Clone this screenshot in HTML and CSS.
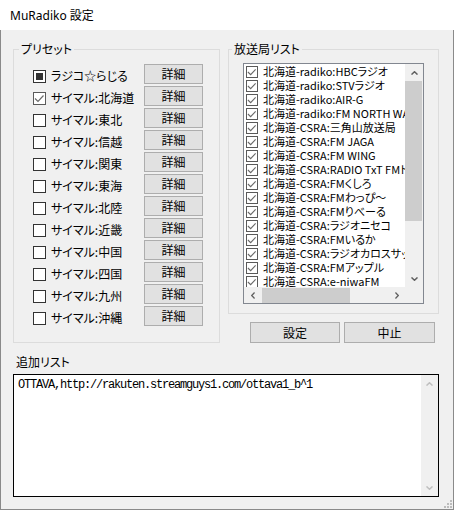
FILE: index.html
```html
<!DOCTYPE html>
<html lang="ja">
<head>
<meta charset="utf-8">
<title>MuRadiko 設定</title>
<link rel="stylesheet" href="styles.css">
</head>
<body>
<svg class="defs" width="0" height="0" aria-hidden="true">
  <defs>
    <symbol id="chk" viewBox="0 0 11 11"><polyline points="1,5.5 4,8.5 9.5,2.5" fill="none" stroke="#6a6a6a" stroke-width="1.2"/></symbol>
    <symbol id="ar-up" viewBox="0 0 7 4"><polyline points="0.5,3.6 3.5,0.7 6.5,3.6" fill="none" stroke="currentColor" stroke-width="1.4"/></symbol>
    <symbol id="ar-down" viewBox="0 0 7 4"><polyline points="0.5,0.4 3.5,3.3 6.5,0.4" fill="none" stroke="currentColor" stroke-width="1.4"/></symbol>
    <symbol id="ar-left" viewBox="0 0 4 7"><polyline points="3.6,0.5 0.7,3.5 3.6,6.5" fill="none" stroke="currentColor" stroke-width="1.4"/></symbol>
    <symbol id="ar-right" viewBox="0 0 4 7"><polyline points="0.4,0.5 3.3,3.5 0.4,6.5" fill="none" stroke="currentColor" stroke-width="1.4"/></symbol>
  </defs>
</svg>
<div class="window">
  <div class="titlebar">MuRadiko 設定</div>
  <div class="client">
    <div class="main">
      <div class="group preset">
        <div class="group-label">プリセット</div>
        <div class="preset-rows">
          <div class="prow"><span class="cb mixed"><span class="mix"></span></span><span class="plabel">ラジコ☆らじる</span><button class="btn detail">詳細</button></div>
          <div class="prow"><span class="cb checked"><svg class="chk"><use href="#chk"/></svg></span><span class="plabel">サイマル:北海道</span><button class="btn detail">詳細</button></div>
          <div class="prow"><span class="cb"></span><span class="plabel">サイマル:東北</span><button class="btn detail">詳細</button></div>
          <div class="prow"><span class="cb"></span><span class="plabel">サイマル:信越</span><button class="btn detail">詳細</button></div>
          <div class="prow"><span class="cb"></span><span class="plabel">サイマル:関東</span><button class="btn detail">詳細</button></div>
          <div class="prow"><span class="cb"></span><span class="plabel">サイマル:東海</span><button class="btn detail">詳細</button></div>
          <div class="prow"><span class="cb"></span><span class="plabel">サイマル:北陸</span><button class="btn detail">詳細</button></div>
          <div class="prow"><span class="cb"></span><span class="plabel">サイマル:近畿</span><button class="btn detail">詳細</button></div>
          <div class="prow"><span class="cb"></span><span class="plabel">サイマル:中国</span><button class="btn detail">詳細</button></div>
          <div class="prow"><span class="cb"></span><span class="plabel">サイマル:四国</span><button class="btn detail">詳細</button></div>
          <div class="prow"><span class="cb"></span><span class="plabel">サイマル:九州</span><button class="btn detail">詳細</button></div>
          <div class="prow"><span class="cb"></span><span class="plabel">サイマル:沖縄</span><button class="btn detail">詳細</button></div>
        </div>
      </div>
      <div class="right">
        <div class="group stations">
          <div class="group-label">放送局リスト</div>
          <div class="list">
            <div class="items">
              <div class="item"><span class="cb small checked"><svg class="chk"><use href="#chk"/></svg></span><span class="itext">北海道-radiko:HBCラジオ</span></div>
              <div class="item"><span class="cb small checked"><svg class="chk"><use href="#chk"/></svg></span><span class="itext">北海道-radiko:STVラジオ</span></div>
              <div class="item"><span class="cb small checked"><svg class="chk"><use href="#chk"/></svg></span><span class="itext">北海道-radiko:AIR-G</span></div>
              <div class="item"><span class="cb small checked"><svg class="chk"><use href="#chk"/></svg></span><span class="itext">北海道-radiko:FM NORTH WAVE</span></div>
              <div class="item"><span class="cb small checked"><svg class="chk"><use href="#chk"/></svg></span><span class="itext">北海道-CSRA:三角山放送局</span></div>
              <div class="item"><span class="cb small checked"><svg class="chk"><use href="#chk"/></svg></span><span class="itext">北海道-CSRA:FM JAGA</span></div>
              <div class="item"><span class="cb small checked"><svg class="chk"><use href="#chk"/></svg></span><span class="itext">北海道-CSRA:FM WING</span></div>
              <div class="item"><span class="cb small checked"><svg class="chk"><use href="#chk"/></svg></span><span class="itext">北海道-CSRA:RADIO TxT FMドラマシティ</span></div>
              <div class="item"><span class="cb small checked"><svg class="chk"><use href="#chk"/></svg></span><span class="itext">北海道-CSRA:FMくしろ</span></div>
              <div class="item"><span class="cb small checked"><svg class="chk"><use href="#chk"/></svg></span><span class="itext">北海道-CSRA:FMわっぴ～</span></div>
              <div class="item"><span class="cb small checked"><svg class="chk"><use href="#chk"/></svg></span><span class="itext">北海道-CSRA:FMりべーる</span></div>
              <div class="item"><span class="cb small checked"><svg class="chk"><use href="#chk"/></svg></span><span class="itext">北海道-CSRA:ラジオニセコ</span></div>
              <div class="item"><span class="cb small checked"><svg class="chk"><use href="#chk"/></svg></span><span class="itext">北海道-CSRA:FMいるか</span></div>
              <div class="item"><span class="cb small checked"><svg class="chk"><use href="#chk"/></svg></span><span class="itext">北海道-CSRA:ラジオカロスサッポロ</span></div>
              <div class="item"><span class="cb small checked"><svg class="chk"><use href="#chk"/></svg></span><span class="itext">北海道-CSRA:FMアップル</span></div>
              <div class="item"><span class="cb small checked"><svg class="chk"><use href="#chk"/></svg></span><span class="itext">北海道-CSRA:e-niwaFM</span></div>
            </div>
            <div class="vscroll">
              <div class="sb-btn"><svg class="ar-v"><use href="#ar-up"/></svg></div>
              <div class="thumb-v"></div>
              <div class="track"></div>
              <div class="sb-btn"><svg class="ar-v"><use href="#ar-down"/></svg></div>
            </div>
            <div class="hscroll">
              <div class="sb-btn h"><svg class="ar-h"><use href="#ar-left"/></svg></div>
              <div class="thumb-h"></div>
              <div class="track"></div>
              <div class="sb-btn h"><svg class="ar-h"><use href="#ar-right"/></svg></div>
            </div>
            <div class="corner"></div>
          </div>
        </div>
        <div class="actions">
          <button class="btn act ok">設定</button>
          <button class="btn act cancel">中止</button>
        </div>
      </div>
    </div>
    <div class="extra-label">追加リスト</div>
    <div class="edit">
      <div class="edit-text">OTTAVA,http://rakuten.streamguys1.com/ottava1_b^1</div>
      <div class="vscroll disabled">
        <div class="sb-btn"><svg class="ar-v"><use href="#ar-up"/></svg></div>
        <div class="track"></div>
        <div class="sb-btn"><svg class="ar-v"><use href="#ar-down"/></svg></div>
      </div>
    </div>
    <svg class="grip" width="9" height="9" viewBox="0 0 9 9" aria-hidden="true">
      <rect x="7" y="1" width="2" height="2" fill="#bcbcbc"/>
      <rect x="4" y="4" width="2" height="2" fill="#bcbcbc"/>
      <rect x="7" y="4" width="2" height="2" fill="#bcbcbc"/>
      <rect x="1" y="7" width="2" height="2" fill="#bcbcbc"/>
      <rect x="4" y="7" width="2" height="2" fill="#bcbcbc"/>
      <rect x="7" y="7" width="2" height="2" fill="#bcbcbc"/>
    </svg>
  </div>
</div>
</body>
</html>
```
FILE: styles.css
```css
* { box-sizing: border-box; }
html, body { margin: 0; padding: 0; }
body {
  width: 454px;
  height: 510px;
  background: #ffffff;
  font-family: "Noto Sans CJK JP", sans-serif;
  font-size: 12px;
  color: #000;
  overflow: hidden;
}
.defs { position: absolute; width: 0; height: 0; }

.window {
  width: 454px;
  height: 510px;
  display: flex;
  flex-direction: column;
}
.titlebar {
  height: 30px;
  flex: none;
  background: #fff;
  padding-left: 10px;
  display: flex;
  align-items: center;
  font-family: "Noto Sans", "Noto Sans CJK JP", sans-serif;
  font-size: 12px;
  color: #000;
}
.client {
  flex: 1;
  position: relative;
  background: #f0f0f0;
  border: 1px solid #8a8a8a;
  border-top: none;
  padding: 19px 14px 0 12px;
}

.main {
  display: flex;
  align-items: flex-start;
  gap: 8px;
}
.group {
  border: 1px solid #dcdcdc;
}
.group-label {
  margin: -8px 0 0 5px;
  padding: 0 2px;
  width: max-content;
  line-height: 14px;
  background: #f0f0f0;
  font-feature-settings: "palt";
}
.stations .group-label { margin-left: 3px; }
.preset {
  width: 207px;
  height: 294px;
}
.preset-rows {
  margin-top: 8px;
  padding: 0 16px 0 19px;
  display: flex;
  flex-direction: column;
  gap: 2px;
}
.prow {
  display: flex;
  align-items: flex-start;
  height: 20px;
}
.plabel {
  margin: 5px 0 0 5px;
  line-height: 14px;
  font-feature-settings: "palt";
  white-space: nowrap;
}

.cb {
  flex: none;
  width: 13px;
  height: 13px;
  margin-top: 6px;
  border: 1px solid #333;
  background: #fff;
  display: flex;
  align-items: center;
  justify-content: center;
}
.cb.checked { border-color: #5a5a5a; }
.cb .chk { width: 11px; height: 11px; display: block; }
.cb .mix { width: 7px; height: 7px; background: #333; }
.cb.small {
  width: 12px;
  height: 12px;
  margin-top: 2px;
  margin-left: 2px;
}
.cb.small .chk { width: 10px; height: 10px; }

.btn {
  font-family: "Noto Sans CJK JP", sans-serif;
  font-size: 12px;
  color: #000;
  background: #e1e1e1;
  border: 1px solid #adadad;
  padding: 0;
  margin: 0;
  line-height: 16px;
}
.detail {
  margin-left: auto;
  width: 59px;
  height: 20px;
}

.right {
  display: flex;
  flex-direction: column;
}
.stations {
  width: 211px;
  height: 265px;
}
.list {
  margin: 7px 0 0 14px;
  width: 181px;
  height: 241px;
  border: 1px solid #828790;
  background: #fff;
  display: grid;
  grid-template-columns: 161px 18px;
  grid-template-rows: 223px 16px;
}
.items {
  overflow: hidden;
}
.item {
  height: 14px;
  display: flex;
  align-items: flex-start;
  white-space: nowrap;
}
.itext {
  margin-left: 5px;
  font-size: 11px;
  line-height: 14px;
  font-feature-settings: "palt";
}

.vscroll {
  background: #f0f0f0;
  display: flex;
  flex-direction: column;
  color: #606060;
}
.sb-btn {
  flex: none;
  height: 17px;
  display: flex;
  align-items: center;
  justify-content: center;
}
.sb-btn.h { width: 17px; height: auto; }
.ar-v { width: 7px; height: 4px; display: block; }
.ar-h { width: 4px; height: 7px; display: block; }
.thumb-v {
  height: 140px;
  margin: 0 1px 0 0;
  background: #cdcdcd;
}
.track { flex: 1; }
.hscroll {
  background: #f0f0f0;
  display: flex;
  color: #606060;
}
.thumb-h {
  width: 88px;
  margin: 1px 0 0 1px;
  background: #cdcdcd;
}
.corner { background: #f0f0f0; }

.actions {
  margin: 8px 0 0 22px;
  display: flex;
  gap: 4px;
}
.act { height: 21px; }
.ok { width: 90px; }
.cancel { width: 91px; }

.extra-label {
  margin-top: 12px;
  padding-left: 3px;
  line-height: 14px;
  font-feature-settings: "palt";
}
.edit {
  margin-top: 5px;
  width: 426px;
  height: 123px;
  border: 1px solid #000;
  background: #fff;
  display: flex;
}
.edit-text {
  flex: 1;
  padding: 3px 0 0 4px;
  font-family: "Liberation Mono", monospace;
  font-size: 12px;
  letter-spacing: -1.2px;
  line-height: 14px;
  white-space: nowrap;
}
.edit .vscroll { width: 17px; }
.vscroll.disabled { color: #bfbfbf; }

.grip {
  position: absolute;
  right: 1px;
  bottom: 1px;
  display: block;
}
```
